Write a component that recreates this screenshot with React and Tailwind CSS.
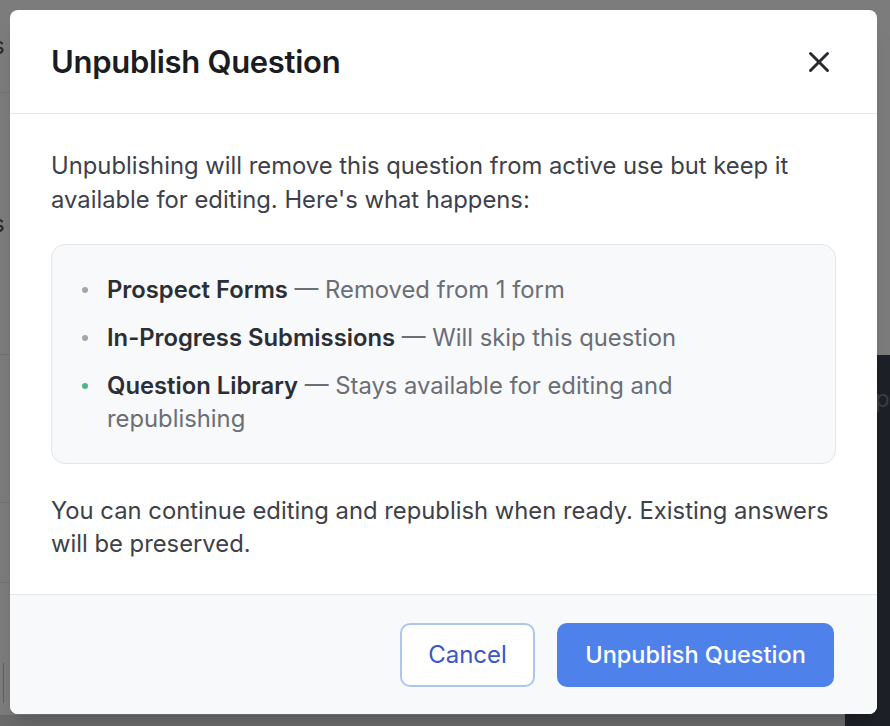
import { X } from 'lucide-react'

const items = [
  { title: 'Prospect Forms', text: 'Removed from 1 form', dot: 'bg-[#a3a6ad]' },
  { title: 'In-Progress Submissions', text: 'Will skip this question', dot: 'bg-[#a3a6ad]' },
  { title: 'Question Library', text: 'Stays available for editing and republishing', dot: 'bg-[#4cb783]' },
]

export default function App() {
  return (
    <div className="relative w-[890px] h-[726px] overflow-hidden bg-[#7c7c7c]"
      style={{ fontFamily: 'Inter, "Noto Sans", sans-serif' }}>

      {/* page behind the overlay, dimmed */}
      <div className="flex h-full text-[24px] text-[#2a2a2a]">
        <div className="w-[845px] flex flex-col">
          <div className="h-[93px] border-b border-[#717171] flex items-center -ml-[8px]">s</div>
          <div className="h-[262px] border-b border-[#717171] flex items-center -ml-[8px]">s</div>
          <div className="h-[148px] border-b border-[#717171]" />
          <div className="h-[80px] border-b border-[#717171]" />
          <div className="flex-1 pt-[80px] pl-[3px]">
            <div className="w-[4px] h-[40px] border-l border-[#5f5f5f]" />
          </div>
          <div className="h-[11px] bg-[#6b6b6b]" />
        </div>
        <div className="flex-1 flex flex-col">
          <div className="h-[355px]" />
          <div className="flex-1 bg-[#1d2027] pl-[30px] pt-[26px] text-[#3a3d44]">p</div>
        </div>
      </div>

      {/* modal */}
      <div className="absolute left-[10px] top-[10px] w-[867px] h-[704px] bg-white rounded-[8px] overflow-hidden flex flex-col shadow-xl">
        <div className="h-[104px] shrink-0 flex items-center justify-between pl-[41px] pr-[41px] border-b border-[#e4e6ea]">
          <h2 className="pt-[2px] text-[31px] font-semibold text-[#1b1c22] tracking-[-0.3px]">Unpublish Question</h2>
          <X size={34} strokeWidth={2.1} className="text-[#2a2b30]" />
        </div>

        <div className="flex-1 px-[41px] pt-[35px] text-[23.8px] leading-[34px] text-[#3e414a]">
          <p>Unpublishing will remove this question from active use but keep it available for editing. Here's what happens:</p>

          <div className="mt-[27px] rounded-[14px] border border-[#e2e5e9] bg-[#f8f9fb] pl-[30px] pr-[28px] py-[28px] flex flex-col gap-[15px]">
            {items.map((it) => (
              <div key={it.title} className="flex items-start leading-[33px]">
                <span className={`mt-[14px] w-[6px] h-[6px] rounded-full shrink-0 ${it.dot}`} />
                <p className="ml-[19px] text-[#6b6e76]">
                  <span className="font-semibold text-[#2c2e35]">{it.title}</span> — {it.text}
                </p>
              </div>
            ))}
          </div>

          <p className="mt-[30px] leading-[33px]">You can continue editing and republish when ready. Existing answers will be preserved.</p>
        </div>

        <div className="h-[120px] shrink-0 border-t border-[#e4e6ea] bg-[#f8f9fb] flex items-center justify-end gap-[22px] pr-[43px]">
          <button className="w-[135px] h-[64px] rounded-[10px] border-2 border-[#aec6ef] bg-white text-[24px] text-[#3b56c7]">
            Cancel
          </button>
          <button className="w-[277px] h-[64px] rounded-[10px] bg-[#4e82ea] text-[23.5px] font-medium text-white">
            Unpublish Question
          </button>
        </div>
      </div>
    </div>
  )
}
